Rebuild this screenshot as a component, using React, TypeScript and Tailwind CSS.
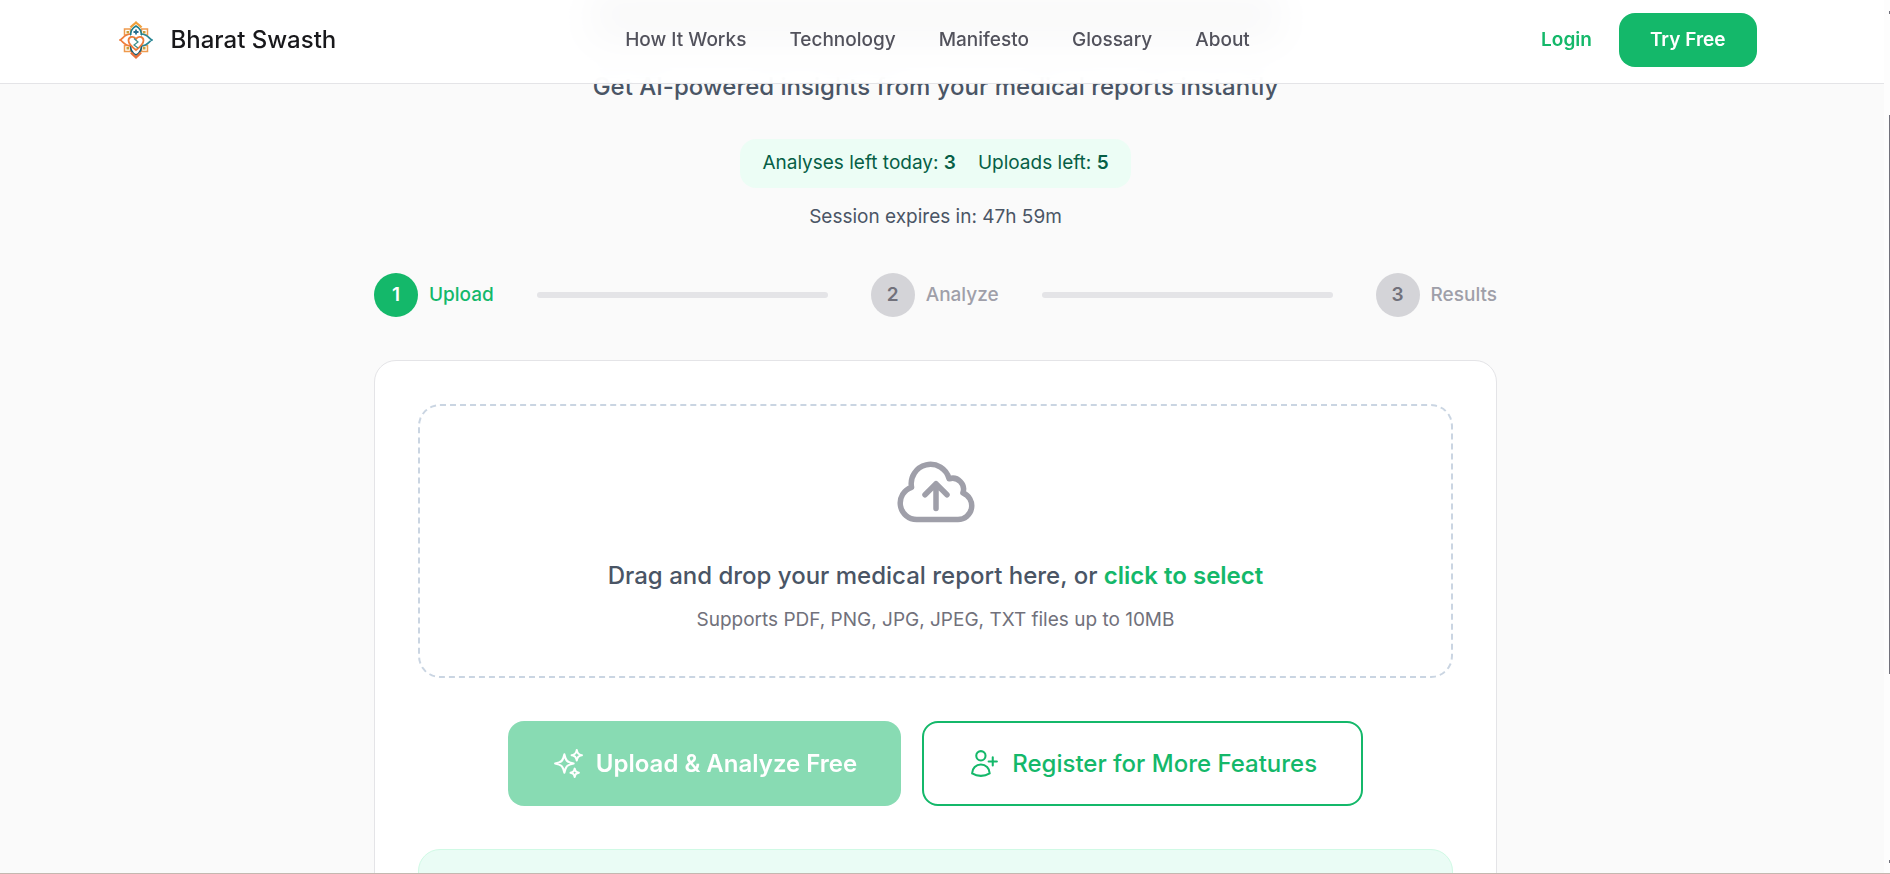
import type { ReactNode } from "react";
import { HiOutlineCloudArrowUp, HiOutlineSparkles, HiOutlineUserPlus } from "react-icons/hi2";

const NAV_LINKS = ["How It Works", "Technology", "Manifesto", "Glossary", "About"];
const STEPS = ["Upload", "Analyze", "Results"];

// Lotus mark: four petals around a heart, with a square knot behind.
function LogoMark() {
  return (
    <svg viewBox="0 0 34 38" className="h-[38px] w-[34px]" fill="none" aria-hidden>
      <g stroke="#ef9a4d" strokeWidth="1.5">
        <path d="M5.500 8h6v6h-6zM22.500 8h6v6h-6zM5.500 24.500h6v6h-6zM22.500 24.500h6v6h-6z" />
      </g>
      <path d="M7.500 10h2.500v2.500h-2.500zM24 10h2.500v2.500h-2.500zM7.500 26h2.500v2.500h-2.500zM24 26h2.500v2.500h-2.500z" fill="#c9a13b" />
      <g fill="#fff" strokeWidth="1.700">
        <path d="M1 19c3-1 4-6 11-6v12c-7 0-8-5-11-6z" stroke="#ee7d3b" />
        <path d="M33 19c-3-1-4-6-11-6v12c7 0 8-5 11-6z" stroke="#2a8795" />
        <path d="M17 5c4 2 6 6 5 11H12c-1-5 1-9 5-11z" stroke="#1f7f8c" />
        <path d="M17 34c4-2 6-6 5-11H12c-1 5 1 9 5 11z" stroke="#155e75" />
      </g>
      <path d="M11.500 14v10h11V14z" fill="#fff" />
      <path d="M11.500 6.500C13 4.500 15 3.500 17 1.500c2 2 4 3 5.500 5" stroke="#f0a03c" strokeWidth="2.200" />
      <path d="M12 31.500c1.500 2 3 3 5 5 2-2 3.500-3 5-5" stroke="#e8703a" strokeWidth="2.200" />
      <path d="M17 29c-4-3-7.500-6-7.500-9.500 0-4 5.500-5 7.500-1.500 2-3.500 7.500-2.500 7.500 1.500 0 3.500-3.500 6.500-7.500 9.500z" fill="#fff" stroke="#ee7d3b" strokeWidth="1.800" />
      <path d="M17 8.500v5M14.500 11h5" stroke="#2b6f8f" strokeWidth="1.800" />
      <path d="M15 17.500l4 3.500-4 3 4 3" stroke="#3b8f8a" strokeWidth="1.200" />
    </svg>
  );
}

function Header() {
  return (
    <header className="absolute inset-x-0 top-0 z-10 border-b border-zinc-200 bg-white/95 pr-[9px] pb-[3px] backdrop-blur-md">
      <div className="mx-auto flex h-[80px] max-w-[1638px] items-center justify-between">
        <a href="#" className="flex flex-1 items-center gap-[18px] text-[24px] font-medium text-zinc-900">
          <LogoMark />
          Bharat Swasth
        </a>
        <nav className="flex gap-[43px] text-[19px] leading-[30px] font-medium whitespace-nowrap text-zinc-600">
          {NAV_LINKS.map((label) => (
            <a key={label} href="#">
              {label}
            </a>
          ))}
        </nav>
        <div className="flex flex-1 items-center justify-end gap-[27px] text-[19px] leading-[30px] font-semibold">
          <a href="#" className="text-[#14b86a]">
            Login
          </a>
          <button type="button" className="h-[54px] rounded-[16px] bg-[#14b86a] px-[31px] text-white">
            Try Free
          </button>
        </div>
      </div>
    </header>
  );
}

function Step({ index, label }: { index: number; label: string }) {
  const active = index === 0;
  return (
    <li className={`flex items-center gap-[11px] ${active ? "text-[#14b86a]" : "text-zinc-400"}`}>
      <span
        className={`flex size-[44px] items-center justify-center rounded-full font-semibold ${
          active ? "bg-[#14b86a] text-white" : "bg-zinc-300 text-zinc-500"
        }`}
      >
        {index + 1}
      </span>
      {label}
    </li>
  );
}

function StepBar() {
  return <li aria-hidden className="mx-[43px] h-[6px] flex-1 rounded-full bg-zinc-200" />;
}

function ActionButton({ className, children, disabled }: { className: string; children: ReactNode; disabled?: boolean }) {
  return (
    <button
      type="button"
      disabled={disabled}
      className={`flex h-[85px] items-center gap-[11px] rounded-[16px] px-[44px] text-[24px] ${className}`}
    >
      {children}
    </button>
  );
}

export default function App() {
  return (
    <div className="relative flex h-screen overflow-hidden bg-[#fafafa] font-[Inter,sans-serif]">
      <div className="relative flex-1 overflow-hidden">
        <Header />
        <main className="mr-[13px] flex flex-col items-center">
          {/* headline, scrolled up behind the frosted header */}
          <div aria-hidden className="mb-[27px] h-[40px] w-[690px] bg-zinc-500 blur-lg" />
          <p className="text-[24px] leading-[39px] font-medium text-gray-600">
            Get AI-powered insights from your medical reports instantly
          </p>
          <div className="mt-[33px] flex h-[49px] items-center gap-[22px] rounded-[16px] bg-[#ecfdf5] px-[22px] text-[19px] text-[#065f46]">
            <span>
              Analyses left today: <strong className="font-semibold">3</strong>
            </span>
            <span>
              Uploads left: <strong className="font-semibold">5</strong>
            </span>
          </div>
          <p className="mt-[15px] text-[19px] leading-[28px] text-gray-600">Session expires in: 47h 59m</p>

          <div className="mt-[42px] w-full max-w-[1123px]">
            <ol className="flex items-center text-[19px] font-medium">
              <Step index={0} label={STEPS[0]} />
              <StepBar />
              <Step index={1} label={STEPS[1]} />
              <StepBar />
              <Step index={2} label={STEPS[2]} />
            </ol>

            <section className="mt-[43px] rounded-[22px] border border-zinc-200 bg-white p-[43px]">
              <label className="flex cursor-pointer flex-col items-center rounded-[22px] border-2 border-dashed border-slate-300 py-[42px]">
                <HiOutlineCloudArrowUp className="size-[88px] text-zinc-400" />
                <span className="mt-[21px] text-[24px] leading-[38px] font-medium text-gray-600">
                  Drag and drop your medical report here, or{" "}
                  <span className="font-semibold text-[#14b86a]">click to select</span>
                </span>
                <span className="mt-[11px] text-[19px] leading-[28px] text-zinc-500">
                  Supports PDF, PNG, JPG, JPEG, TXT files up to 10MB
                </span>
                <input type="file" className="sr-only" />
              </label>

              <div className="mt-[43px] flex justify-center gap-[21px]">
                <ActionButton disabled className="bg-[#14b86a] font-semibold text-white opacity-50">
                  <HiOutlineSparkles className="size-[33px]" />
                  Upload &amp; Analyze Free
                </ActionButton>
                <ActionButton className="border-2 border-[#14b86a] font-medium text-[#14b86a]">
                  <HiOutlineUserPlus className="size-[33px]" />
                  Register for More Features
                </ActionButton>
              </div>

              <div className="mt-[43px] h-[120px] rounded-[22px] border border-emerald-100 bg-[#eafcf5]" />
            </section>
          </div>
        </main>
      </div>

      {/* scrollbar gutter, with the thumb on its outer edge */}
      <div className="flex w-[6px] flex-col items-end justify-between bg-[#fdfdfd] py-[11px]">
        <span className="h-[3px] w-px bg-zinc-500" />
        <span className="mt-[101px] mb-auto h-[559px] w-px bg-zinc-500" />
        <span className="h-[3px] w-px bg-zinc-500" />
      </div>
      <div className="absolute inset-x-0 bottom-0 h-px bg-[#c4b8b0]" />
    </div>
  );
}
